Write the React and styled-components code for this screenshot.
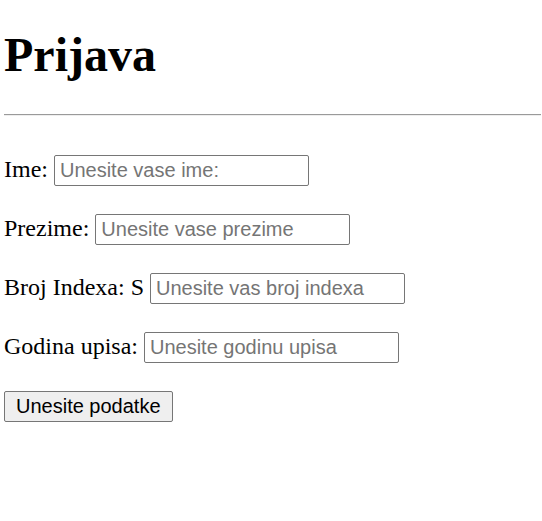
import React from "react";
import styled, { createGlobalStyle } from "styled-components";

const GlobalStyle = createGlobalStyle`
  body {
    margin: 0;
    background: #fff;
    font-family: "Liberation Serif", "Times New Roman", serif;
    color: #000;
  }
`;

const Page = styled.div`
  padding: 0 1px 0 4px;
`;

const Title = styled.h1`
  font-size: 48px;
  font-weight: bold;
  margin: 27px 0 32px;
  line-height: normal;
`;

const Divider = styled.hr`
  margin: 0 0 36px;
  border: 0;
  border-top: 1px solid #9a9a9a;
  border-bottom: 1px solid #eeeeee;
  height: 0;
`;

const Form = styled.form``;

const Row = styled.p`
  font-size: 24px;
  line-height: 35px;
  margin: 24px 0;
`;

const Field = styled.input`
  font-family: "Liberation Sans", Arial, sans-serif;
  font-size: 20px;
  width: 255px;
  height: 31px;
  box-sizing: border-box;
  padding: 1px 5px;
  border: 1px solid #767676;
  border-radius: 2px;
  vertical-align: baseline;
  &::placeholder {
    color: #757575;
  }
`;

const SubmitButton = styled.button`
  font-family: "Liberation Sans", Arial, sans-serif;
  font-size: 20px;
  height: 31px;
  margin-top: 3px;
  padding: 0 11px;
  background: #efefef;
  color: #000;
  border: 1px solid #767676;
  border-radius: 2px;
`;

const fields = [
  { label: "Ime:", placeholder: "Unesite vase ime:" },
  { label: "Prezime:", placeholder: "Unesite vase prezime" },
  { label: "Broj Indexa: S", placeholder: "Unesite vas broj indexa" },
  { label: "Godina upisa:", placeholder: "Unesite godinu upisa" },
];

export default function App() {
  return (
    <Page>
      <GlobalStyle />
      <Title>Prijava</Title>
      <Divider />
      <Form onSubmit={(e) => e.preventDefault()}>
        {fields.map((f) => (
          <Row key={f.label}>
            {f.label} <Field type="text" placeholder={f.placeholder} />
          </Row>
        ))}
        <SubmitButton type="submit">Unesite podatke</SubmitButton>
      </Form>
    </Page>
  );
}
